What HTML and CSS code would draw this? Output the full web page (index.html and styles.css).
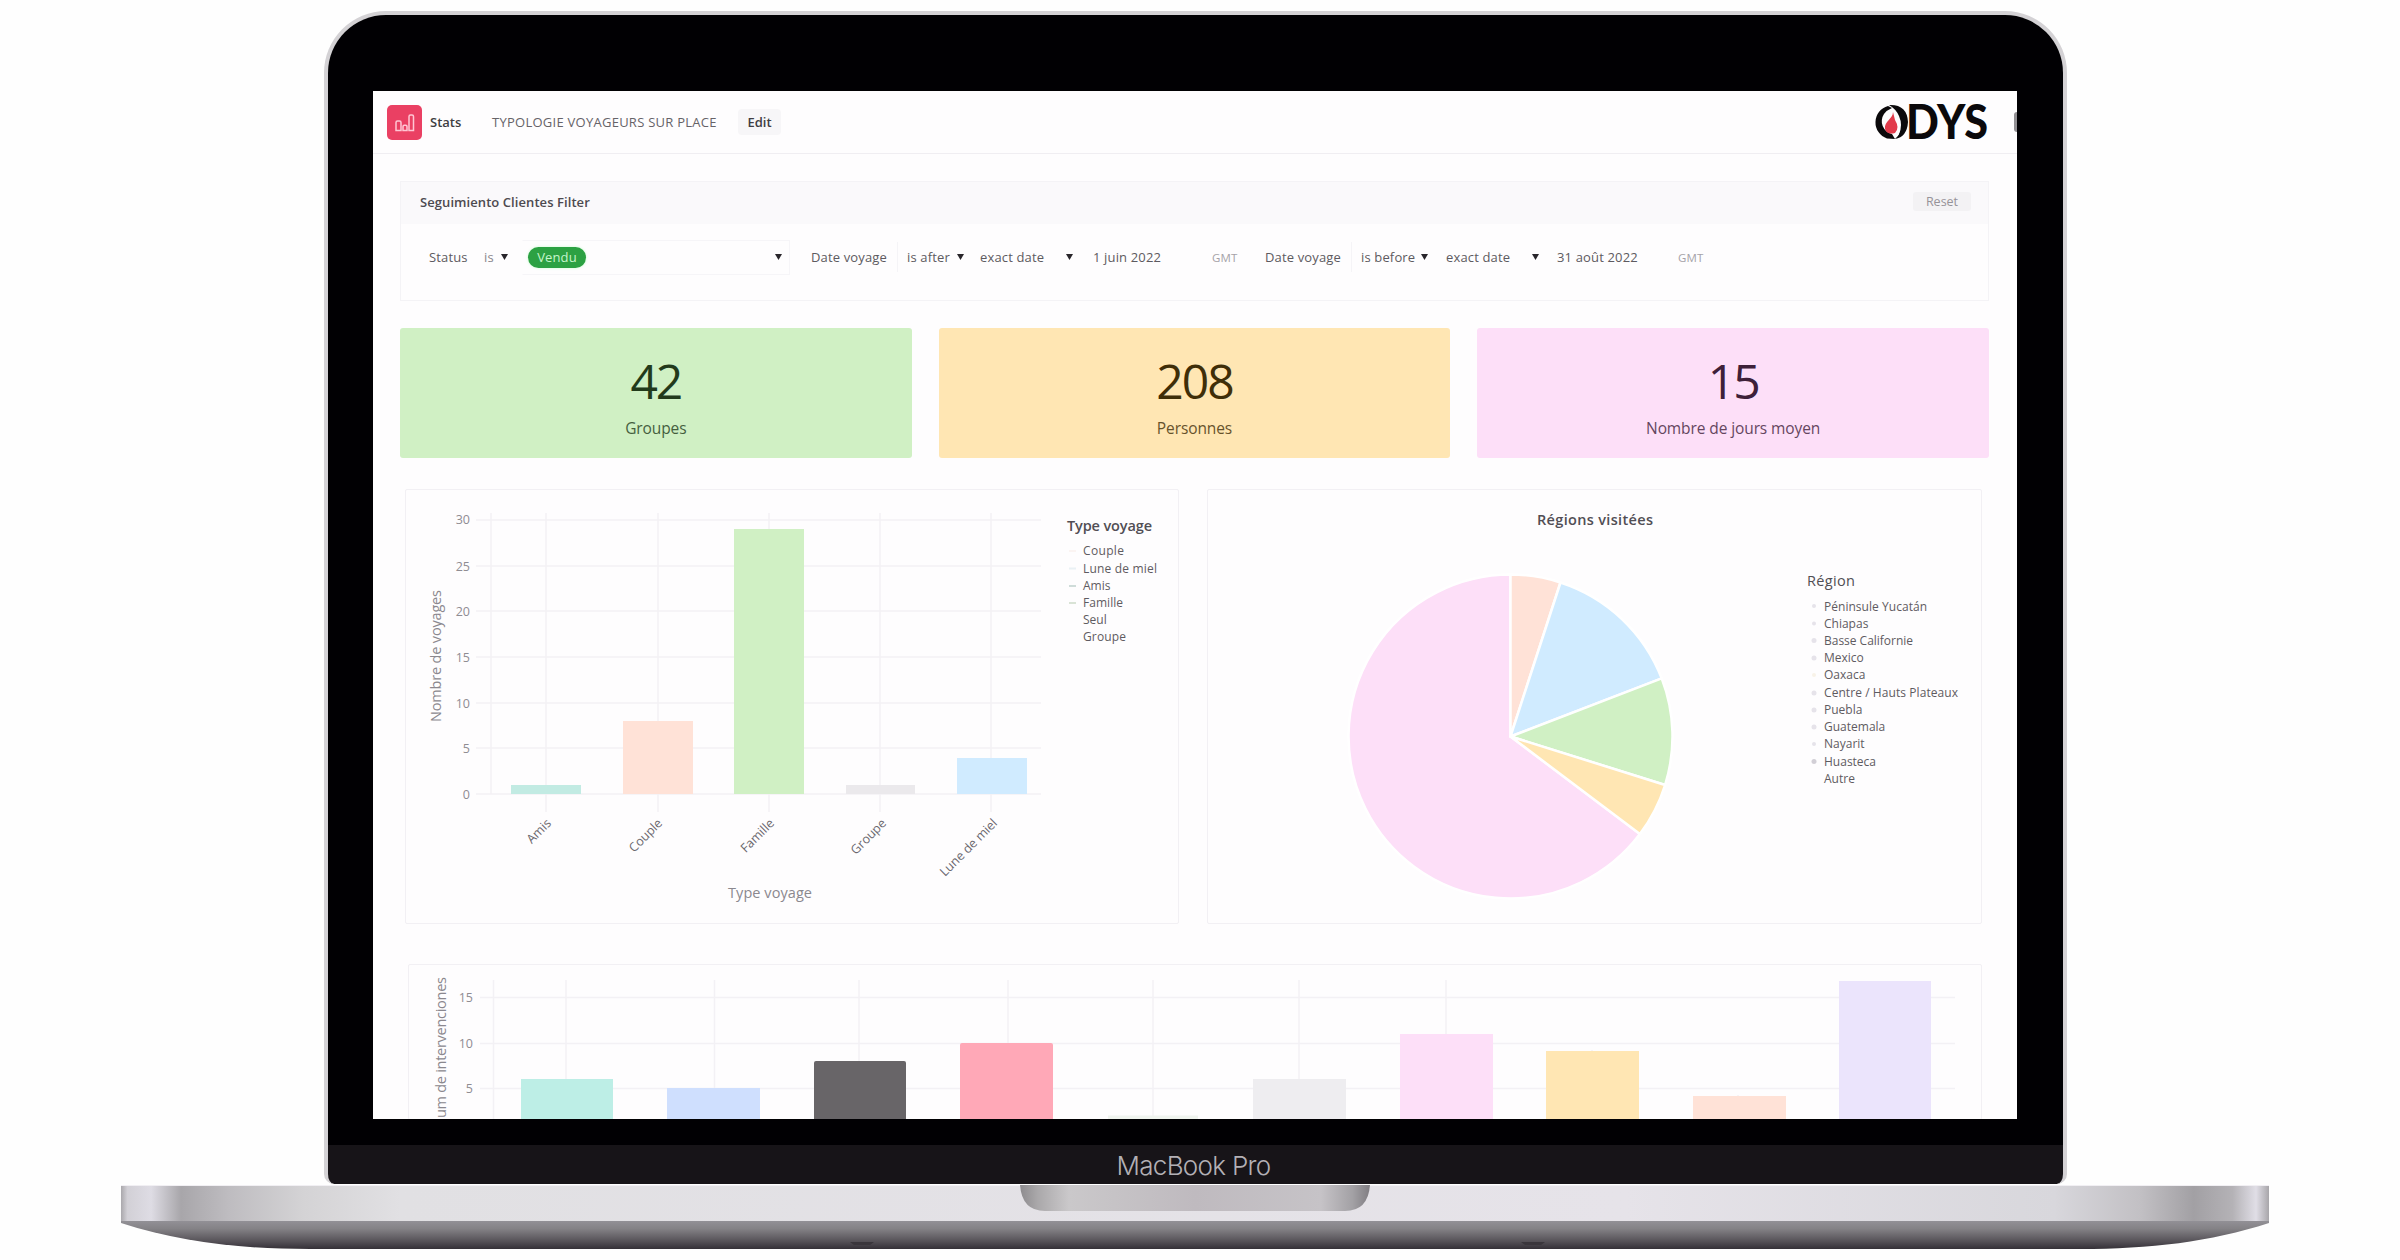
FILE: index.html
```html
<!DOCTYPE html>
<html lang="fr">
<head>
<meta charset="utf-8">
<title>Stats – Typologie voyageurs sur place</title>
<link rel="stylesheet" href="styles.css">
</head>
<body>
<main class="laptop">
  <section class="lid">
    <div class="screen">
      <header class="topbar">
        <svg class="app-icon" viewBox="0 0 35 35">
          <rect width="35" height="35" rx="5" fill="#ea4063"/>
          <path d="M9 25.500V17.500q0-1.500 1.500-1.500h2q1.500 0 1.500 1.500V25.500ZM16 25.500V21.500q0-1.200 1.200-1.200h1.600q1.200 0 1.200 1.200V25.500ZM22 25.500V11.500q0-1.500 1.500-1.500h1.500q1.500 0 1.500 1.500V25.500Z" fill="none" stroke="#ffc6d4" stroke-width="1.500"/>
        </svg>
        <strong class="app-name">Stats</strong>
        <span class="crumb">TYPOLOGIE VOYAGEURS SUR PLACE</span>
        <span class="edit">Edit</span>
        <svg class="brand" viewBox="0 0 116 38">
          <path d="M15 3A17 17 0 0 0 14 35.500L22 36L19 31A13 13 0 0 1 11 11Q14 7 19 5Z" fill="#0b090b"/>
          <path d="M16 2Q34 1 35 19Q34 34 22 36L26 31Q30 22 26 13Q23 6 16 2Z" fill="#0b090b"/>
          <path d="M20 9C20 16 11 18 12 26Q14 32 22 30Q27 25 22 17Q21 13 20 9Z" fill="#e23c4c"/>
          <path d="M23 34Q28 29 25 20" fill="none" stroke="#fff" stroke-width="1.500"/>
          <text class="brand-text" x="33" y="35.500" textLength="82" lengthAdjust="spacingAndGlyphs">DYS</text>
        </svg>
        <i class="edge-mark"></i>
      </header>

      <section class="filter">
        <div class="filter-head"><strong>Seguimiento Clientes Filter</strong><span class="reset">Reset</span></div>
        <div class="filter-row">
          <span>Status</span><span class="op">is</span><i class="caret"></i>
          <div class="select"><b class="tag">Vendu</b><i class="caret"></i></div>
          <span class="field">Date voyage</span><span>is after</span><i class="caret"></i><span>exact date</span><i class="caret"></i><span>1 juin 2022</span><span class="tz">GMT</span>
          <span class="field">Date voyage</span><span>is before</span><i class="caret"></i><span>exact date</span><i class="caret"></i><span>31 août 2022</span><span class="tz">GMT</span>
        </div>
      </section>

      <section class="kpis">
        <div class="kpi green"><b>42</b><span>Groupes</span></div>
        <div class="kpi yellow"><b>208</b><span>Personnes</span></div>
        <div class="kpi pink"><b>15</b><span>Nombre de jours moyen</span></div>
      </section>

      <section class="charts">
        <svg class="panel" viewBox="406 490 772 433">
          <g class="grid">
            <path d="M476 520H1041M476 566H1041M476 611H1041M476 657H1041M476 703H1041M476 748H1041M476 794H1041"/>
            <path d="M491 513V794M546 513V812M658 513V812M769 513V812M880 513V812M991 513V812"/>
          </g>
          <rect x="511" y="785" width="70" height="9" fill="#c2ebe3"/>
          <rect x="623" y="721" width="70" height="73" fill="#ffe2d7"/>
          <rect x="734" y="529" width="70" height="265" fill="#d0f0c4"/>
          <rect x="846" y="785" width="69" height="9" fill="#ebe9ec"/>
          <rect x="957" y="758" width="70" height="36" fill="#d0ebff"/>
          <g class="ticks">
            <text x="470" y="524">30</text><text x="470" y="570.500">25</text><text x="470" y="615.500">20</text><text x="470" y="661.500">15</text><text x="470" y="707.500">10</text><text x="470" y="752.500">5</text><text x="470" y="798.500">0</text>
          </g>
          <g class="names">
            <text transform="translate(552 824) rotate(-45)">Amis</text>
            <text transform="translate(663 824) rotate(-45)">Couple</text>
            <text transform="translate(775 824) rotate(-45)">Famille</text>
            <text transform="translate(887 824) rotate(-45)">Groupe</text>
            <text transform="translate(998 824) rotate(-45)">Lune de miel</text>
          </g>
          <text class="axis" transform="translate(441 722) rotate(-90)" textLength="132">Nombre de voyages</text>
          <text class="axis" x="728" y="898" textLength="84">Type voyage</text>
          <text class="legend-title" x="1067" y="531" textLength="85">Type voyage</text>
          <g class="legend">
            <text x="1083" y="555" textLength="41">Couple</text><text x="1083" y="572.500" textLength="74">Lune de miel</text><text x="1083" y="590">Amis</text><text x="1083" y="607" textLength="40">Famille</text><text x="1083" y="624">Seul</text><text x="1083" y="641" textLength="43">Groupe</text>
          </g>
          <g stroke-width="2">
            <path d="M1069 551h7" stroke="#fbf4f2"/><path d="M1069 568.500h7" stroke="#eaf1f5"/><path d="M1069 586h7" stroke="#cfdcd9"/><path d="M1069 603h7" stroke="#d9e3d6"/>
          </g>
        </svg>

        <svg class="panel" viewBox="1208 490 773 433">
          <text class="legend-title" x="1537" y="525" textLength="116">Régions visitées</text>
          <g stroke="#fff" stroke-width="2.500" stroke-linejoin="round" transform="translate(1510.500 736.500)">
            <path d="M0 0L129.400 97.500A162 162 0 1 1 0-162Z" fill="#fddff8"/>
            <path d="M0 0V-162A162 162 0 0 1 50-154Z" fill="#ffe2d7"/>
            <path d="M0 0L50-154A162 162 0 0 1 151.200-58.100Z" fill="#d0ebff"/>
            <path d="M0 0L151.200-58.100A162 162 0 0 1 154.600 48.500Z" fill="#d0f0c4"/>
            <path d="M0 0L154.600 48.500A162 162 0 0 1 129.400 97.500Z" fill="#ffe6b3"/>
          </g>
          <text class="legend-title region" x="1807" y="586" textLength="48">Région</text>
          <g class="legend">
            <text x="1824" y="610.500" textLength="103">Péninsule Yucatán</text><text x="1824" y="627.500">Chiapas</text><text x="1824" y="644.500" textLength="89">Basse Californie</text><text x="1824" y="662">Mexico</text><text x="1824" y="679">Oaxaca</text><text x="1824" y="697" textLength="134">Centre / Hauts Plateaux</text><text x="1824" y="714">Puebla</text><text x="1824" y="731">Guatemala</text><text x="1824" y="748">Nayarit</text><text x="1824" y="765.500">Huasteca</text><text x="1824" y="782.500">Autre</text>
          </g>
          <g fill="#e6e3ea">
            <circle cx="1814" cy="606" r="2"/><circle cx="1814" cy="623.500" r="2"/><circle cx="1814" cy="640.500" r="2.500"/><circle cx="1814" cy="658" r="2.500"/><circle cx="1814" cy="675" r="2" fill="#f8f2e8"/><circle cx="1814" cy="693" r="2.500"/><circle cx="1814" cy="710" r="2.500"/><circle cx="1814" cy="727" r="2.500"/><circle cx="1814" cy="744" r="2"/><circle cx="1814" cy="761.500" r="2.500" fill="#d2cfd6"/>
          </g>
        </svg>
      </section>

      <svg class="panel wide" viewBox="409 965 1572 154">
        <g class="grid">
          <path d="M480 997.500H1955M480 1043.500H1955M480 1088.500H1955"/>
          <path d="M493.500 980V1119M566 980V1119M714.500 980V1119M859 980V1119M1008 980V1119M1153 980V1119M1299 980V1119M1446 980V1119M1592 1050V1119M1738 1095V1119"/>
        </g>
        <path d="M521 1120V1079h92V1120Z" fill="#bdeee6"/>
        <path d="M667 1120V1088h93V1120Z" fill="#cfdffe"/>
        <path d="M814 1120V1063q0-2 2-2h88q2 0 2 2V1120Z" fill="#686568"/>
        <path d="M960 1120V1045q0-2 2-2h89q2 0 2 2V1120Z" fill="#ffa8b7"/>
        <path d="M1108 1120V1115.500h90V1120Z" fill="#f0f4ef"/>
        <path d="M1253 1120V1079h93V1120Z" fill="#eeedf0"/>
        <path d="M1400 1120V1034h93V1120Z" fill="#fddff8"/>
        <path d="M1546 1120V1051h93V1120Z" fill="#ffe6b3"/>
        <path d="M1693 1120V1096h93V1120Z" fill="#ffe2d7"/>
        <path d="M1839 1120V981h92V1120Z" fill="#ebe4fc"/>
        <g class="ticks">
          <text x="473" y="1002">15</text><text x="473" y="1047.500">10</text><text x="473" y="1092.500">5</text>
        </g>
        <text class="axis" transform="translate(446 1118) rotate(-90)" textLength="141">um de intervenciones</text>
      </svg>
    </div>
    <footer class="chin">MacBook Pro</footer>
  </section>
  <svg class="base" viewBox="121 1184 2148 66">
    <defs>
      <linearGradient id="deck">
        <stop offset="0" stop-color="#aaa8ac"/><stop offset=".003" stop-color="#d2d0d6"/><stop offset=".014" stop-color="#dedce4"/><stop offset=".028" stop-color="#a8a6aa"/><stop offset=".05" stop-color="#bebcc0"/><stop offset=".085" stop-color="#d4d3d5"/><stop offset=".13" stop-color="#e1e0e3"/><stop offset=".7" stop-color="#e6e3e9"/><stop offset=".9" stop-color="#d8d7dc"/><stop offset=".94" stop-color="#c2c0c4"/><stop offset=".965" stop-color="#a2a0a4"/><stop offset=".983" stop-color="#b4b2b6"/><stop offset=".994" stop-color="#e0dee6"/><stop offset="1" stop-color="#a8a6aa"/>
      </linearGradient>
      <linearGradient id="under" x2="0" y2="1">
        <stop offset="0" stop-color="#949298"/><stop offset=".3" stop-color="#848286"/><stop offset=".75" stop-color="#545056"/><stop offset="1" stop-color="#343037"/>
      </linearGradient>
      <linearGradient id="notch">
        <stop offset="0" stop-color="#8d8b8e"/><stop offset=".05" stop-color="#aaa8aa"/><stop offset=".14" stop-color="#cac8ca"/><stop offset=".5" stop-color="#bfbabf"/><stop offset=".86" stop-color="#c6c3c7"/><stop offset=".95" stop-color="#a3a1a5"/><stop offset="1" stop-color="#807d82"/>
      </linearGradient>
    </defs>
    <path d="M121 1220H2269V1223C2210 1242 2150 1249 2080 1249H310C240 1249 180 1242 121 1223Z" fill="url(#under)"/>
    <rect x="121" y="1185" width="2148" height="36" fill="url(#deck)"/>
    <path d="M121 1185.500H2269" stroke="#f1eff3"/>
    <path d="M1020 1185H1370Q1368 1211 1345 1211H1045Q1022 1211 1020 1185Z" fill="url(#notch)"/>
    <path d="M850 1242h24l-4 3h-16ZM1521 1242h24l-4 3h-16Z" fill="#3a363c"/>
  </svg>
</main>
</body>
</html>
```
FILE: styles.css
```css
* { box-sizing: border-box; }
body {
  margin: 0;
  background: #fefefe;
  color: #4a474c;
  font-family: "Open Sans", "Noto Sans", sans-serif;
}
.laptop {
  width: 2400px;
  height: 1260px;
  padding-top: 11px;
  display: flex;
  flex-direction: column;
  align-items: center;
  overflow: hidden;
}
.lid {
  width: 1743px;
  height: 1173px;
  margin-right: 9px;
  padding: 76px 44px 0 44px;
  border: 4px solid #d4d2d5;
  border-bottom: 0;
  border-radius: 62px 62px 10px 10px;
  background: linear-gradient(#010003 1130px, #171418 1130px);
  flex: none;
}
.screen {
  width: 1644px;
  height: 1028px;
  margin-left: 1px;
  background: #fefdfe;
  overflow: hidden;
}
.topbar {
  height: 63px;
  padding: 0 0 0 14px;
  display: flex;
  align-items: center;
  border-bottom: 1px solid #f0eef2;
  font-size: 13px;
}
.app-icon { width: 35px; height: 35px; }
.app-name { margin-left: 8px; width: 62px; font-weight: 600; color: #403d42; }
.crumb { width: 246px; font-size: 13px; letter-spacing: .26px; white-space: nowrap; color: #666368; }
.edit {
  width: 43px;
  padding: 4px 0;
  border-radius: 4px;
  background: #f7f6f8;
  color: #403d42;
  font-weight: 600;
  text-align: center;
}
.brand { width: 116px; height: 38px; margin-left: auto; margin-right: 25px; overflow: visible; }
.brand-text { font: 900 47px Lato, sans-serif; fill: #0b090b; }
.edge-mark { width: 3px; height: 20px; background: #929094; border-radius: 3px 0 0 3px; }

.filter {
  width: 1589px;
  height: 120px;
  margin: 27px 0 0 27px;
  border: 1px solid #f4f3f6;
}
.filter-head {
  height: 42px;
  padding: 0 17px 3px 19px;
  display: flex;
  align-items: center;
  justify-content: space-between;
  background: #faf9fb;
  font-size: 13px;
}
.filter-head strong { font-weight: 600; color: #4d4a50; letter-spacing: .07px; }
.reset { width: 58px; padding: 1px 0; background: #f3f2f4; border-radius: 3px; color: #969399; text-align: center; font-size: 12.5px; }
.filter-row {
  height: 66px;
  padding-left: 28px;
  display: grid;
  grid-template-columns: 55px 17px 21px 289px 96px 50px 23px 86px 27px 119px 53px 96px 60px 25px 86px 25px 121px 60px;
  align-items: center;
  font-size: 13px;
  letter-spacing: .15px;
  white-space: nowrap;
  color: #5d5a60;
}
.op { color: #8a878d; }
.caret { width: 7px; height: 6px; background: #29262b; clip-path: polygon(0 0, 100% 0, 50% 100%); }
.select {
  width: 268px;
  height: 35px;
  padding: 0 7px 0 5px;
  display: flex;
  align-items: center;
  justify-content: space-between;
  border: 1px solid #f6f5f8;
  border-left-color: transparent;
}
.tag {
  width: 58px;
  height: 21px;
  border-radius: 11px;
  background: #2ca143;
  box-shadow: 0 0 3px #c8ffd0;
  color: #c6f5cb;
  font-weight: 400;
  line-height: 21px;
  text-align: center;
}
.field { align-self: center; height: 30px; padding-left: 13px; width: 100px; margin-left: -13px; line-height: 30px; border-right: 1px solid #f5f4f7; }
.tz { font-size: 11.5px; color: #a5a2a8; }

.kpis {
  width: 1589px;
  margin: 27px 0 0 27px;
  display: grid;
  grid-template-columns: repeat(3, 1fr);
  gap: 27px;
}
.kpi { height: 130px; padding-top: 22px; display: flex; flex-direction: column; align-items: center; border-radius: 3px; }
.kpi b { height: 64px; font-size: 48px; line-height: 62px; font-weight: 400; letter-spacing: -2px; }
.kpi span { height: 28px; font-size: 15.500px; line-height: 28px; letter-spacing: -.1px; opacity: .8; }
.green { background: #d0f0c4; color: #223a1b; }
.yellow { background: #ffe6b3; color: #3f2e08; }
.pink { background: #fddff8; color: #3e2039; }

.charts { display: flex; gap: 28px; margin: 31px 0 0 32px; }
.panel { width: 774px; height: 435px; border: 1px solid #f2f0f4; border-radius: 2px; display: block; }
.panel + .panel { width: 775px; }
.charts + .wide { width: 1574px; height: 156px; margin: 40px 0 0 35px; }
.grid path { fill: none; stroke: #f3f1f5; stroke-width: 1.500; }
.ticks { font-size: 12.5px; fill: #8f8c92; text-anchor: end; }
.names { font-size: 12.5px; fill: #6b686e; text-anchor: end; }
.axis { font-size: 14.5px; fill: #8b888e; }
.legend-title { font-size: 14.5px; font-weight: 600; fill: #514e54; }
.region { font-weight: 400; }
.legend { font-size: 12px; fill: #5e5b61; }

.chin {
  height: 64px;
  padding-top: 27px;
  color: #b3b0b5;
  font: 300 26px/40px Inter, Roboto, sans-serif;
  letter-spacing: -.7px;
  text-align: center;
  padding-right: 4px;
}
.base { width: 2148px; height: 66px; margin-right: 10px; flex: none; display: block; }
```
